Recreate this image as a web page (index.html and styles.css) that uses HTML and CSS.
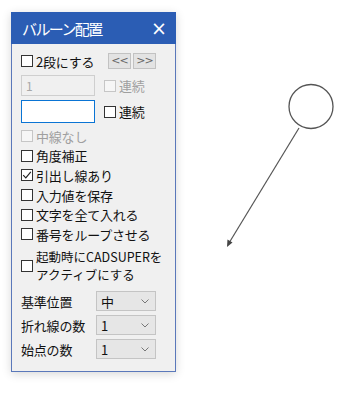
FILE: index.html
```html
<!DOCTYPE html>
<html lang="ja">
<head>
<meta charset="utf-8">
<link rel="stylesheet" href="styles.css">
</head>
<body>
<div class="page">
  <div class="dialog">
    <div class="titlebar">
      <span class="title">バルーン配置</span>
      <span class="close">×</span>
    </div>
    <div class="content">
      <div class="row r1">
        <label class="cb"><span class="box"></span><span class="txt">2段にする</span></label>
        <div class="btns">
          <span class="btn">&lt;&lt;</span>
          <span class="btn">&gt;&gt;</span>
        </div>
      </div>
      <div class="row r2">
        <div class="input disabled">1</div>
        <label class="cb dis"><span class="box"></span><span class="txt">連続</span></label>
      </div>
      <div class="row r3">
        <div class="input focus"></div>
        <label class="cb"><span class="box"></span><span class="txt">連続</span></label>
      </div>
      <div class="checks">
        <label class="cb dis"><span class="box"></span><span class="txt">中線なし</span></label>
        <label class="cb"><span class="box"></span><span class="txt">角度補正</span></label>
        <label class="cb"><span class="box checked"><svg viewBox="0 0 12 12" width="12" height="12"><path d="M2.2 6.2 L4.8 8.8 L9.8 2.8" fill="none" stroke="#222" stroke-width="1.2"/></svg></span><span class="txt">引出し線あり</span></label>
        <label class="cb"><span class="box"></span><span class="txt">入力値を保存</span></label>
        <label class="cb"><span class="box"></span><span class="txt">文字を全て入れる</span></label>
        <label class="cb"><span class="box"></span><span class="txt">番号をループさせる</span></label>
      </div>
      <label class="cb multi"><span class="box"></span><span class="txt"><span class="line">起動時にCADSUPERを</span><span class="line">アクティブにする</span></span></label>
      <div class="selects">
        <div class="selrow"><span class="lbl">基準位置</span><div class="select"><span>中</span><svg class="chev" viewBox="0 0 8 5" width="8" height="5"><path d="M0.5 0.5 L4 4 L7.5 0.5" fill="none" stroke="#777" stroke-width="1"/></svg></div></div>
        <div class="selrow"><span class="lbl">折れ線の数</span><div class="select"><span>1</span><svg class="chev" viewBox="0 0 8 5" width="8" height="5"><path d="M0.5 0.5 L4 4 L7.5 0.5" fill="none" stroke="#777" stroke-width="1"/></svg></div></div>
        <div class="selrow"><span class="lbl">始点の数</span><div class="select"><span>1</span><svg class="chev" viewBox="0 0 8 5" width="8" height="5"><path d="M0.5 0.5 L4 4 L7.5 0.5" fill="none" stroke="#777" stroke-width="1"/></svg></div></div>
      </div>
    </div>
  </div>
  <div class="canvas">
    <svg class="drawing" viewBox="176 0 174 403" width="174" height="403">
      <circle cx="311" cy="106.5" r="22" fill="none" stroke="#555" stroke-width="1.3"/>
      <line x1="299" y1="128" x2="229" y2="243" stroke="#555" stroke-width="1.2"/>
      <path d="M227 247 L227.5 239.5 L232.5 242.5 Z" fill="#444"/>
    </svg>
  </div>
</div>
</body>
</html>
```

FILE: styles.css
```css
html, body {
  margin: 0;
  padding: 0;
  background: #ffffff;
}
body {
  width: 350px;
  height: 403px;
  overflow: hidden;
  font-family: "Noto Sans CJK JP", "Noto Sans", sans-serif;
  color: #111;
}
.page {
  display: flex;
  align-items: flex-start;
  height: 403px;
}
.dialog {
  margin: 12px 0 0 11px;
  width: 165px;
  height: 360px;
  display: flex;
  flex-direction: column;
  box-shadow: 0 2px 9px rgba(0, 0, 0, 0.16);
}
.titlebar {
  height: 32px;
  flex: none;
  background: #2b5db4;
  display: flex;
  align-items: center;
  justify-content: space-between;
  padding: 0 9px 0 11px;
  color: #fff;
}
.title {
  font-size: 15px;
  letter-spacing: -1.6px;
  line-height: 1;
}
.close {
  font-family: "DejaVu Sans", sans-serif;
  font-size: 19px;
  line-height: 1;
}
.content {
  flex: 1;
  background: #f0f0f0;
  border: 1px solid #5a78ba;
  border-top: none;
  padding: 9px 19px 0 9px;
  display: flex;
  flex-direction: column;
  font-size: 13px;
}
.row {
  display: flex;
  align-items: center;
}
.r1 {
  height: 16px;
}
.r2 {
  height: 21px;
  margin-top: 6px;
}
.r3 {
  height: 23px;
  margin-top: 4px;
}
.cb {
  display: flex;
  align-items: center;
  gap: 3px;
  line-height: 1;
  white-space: nowrap;
}
.box {
  width: 12px;
  height: 12px;
  border: 1px solid #333;
  background: #fff;
  flex: none;
  display: flex;
  box-sizing: border-box;
}
.box svg {
  display: block;
  margin: -1px;
}
.txt {
  letter-spacing: -0.2px;
}
.dis .box {
  border-color: #c6c6c6;
  background: #f6f6f6;
}
.dis .txt {
  color: #9f9f9f;
}
.btns {
  margin-left: auto;
  display: flex;
  gap: 2px;
}
.btn {
  width: 23px;
  height: 16px;
  box-sizing: border-box;
  background: #e3e3e3;
  border: 1px solid #c2c2c2;
  color: #666;
  font-size: 11px;
  line-height: 14px;
  text-align: center;
  font-family: "DejaVu Sans", sans-serif;
  letter-spacing: -1px;
}
.input {
  width: 74px;
  height: 100%;
  box-sizing: border-box;
  margin-right: 9px;
  flex: none;
}
.input.disabled {
  background: #f0f0f0;
  border: 1px solid #cfcfcf;
  color: #a8a8a8;
  font-size: 12px;
  padding-left: 4px;
  line-height: 19px;
}
.input.focus {
  background: #fff;
  border: 1px solid #0a74d4;
}
.checks {
  margin-top: 3.5px;
  display: flex;
  flex-direction: column;
}
.checks .cb {
  height: 19.6px;
}
.multi {
  margin-top: 4px;
  height: 36px;
  align-items: center;
}
.multi .txt {
  display: flex;
  flex-direction: column;
  font-size: 12.5px;
  letter-spacing: 0;
}
.line {
  display: block;
  line-height: 18.2px;
  height: 18.2px;
}
.selects {
  margin-top: 7px;
  display: flex;
  flex-direction: column;
  gap: 4px;
}
.selrow {
  display: flex;
  align-items: center;
  height: 20px;
}
.lbl {
  width: 75px;
  flex: none;
  letter-spacing: -0.2px;
}
.select {
  width: 62px;
  height: 20px;
  box-sizing: border-box;
  background: #e6e6e6;
  border: 1px solid #c4c4c4;
  display: flex;
  align-items: center;
  justify-content: space-between;
  padding: 0 6px 0 4px;
  font-size: 13px;
}
.chev {
  display: block;
}
.canvas {
  flex: 1;
  height: 403px;
}
.drawing {
  display: block;
}
```
